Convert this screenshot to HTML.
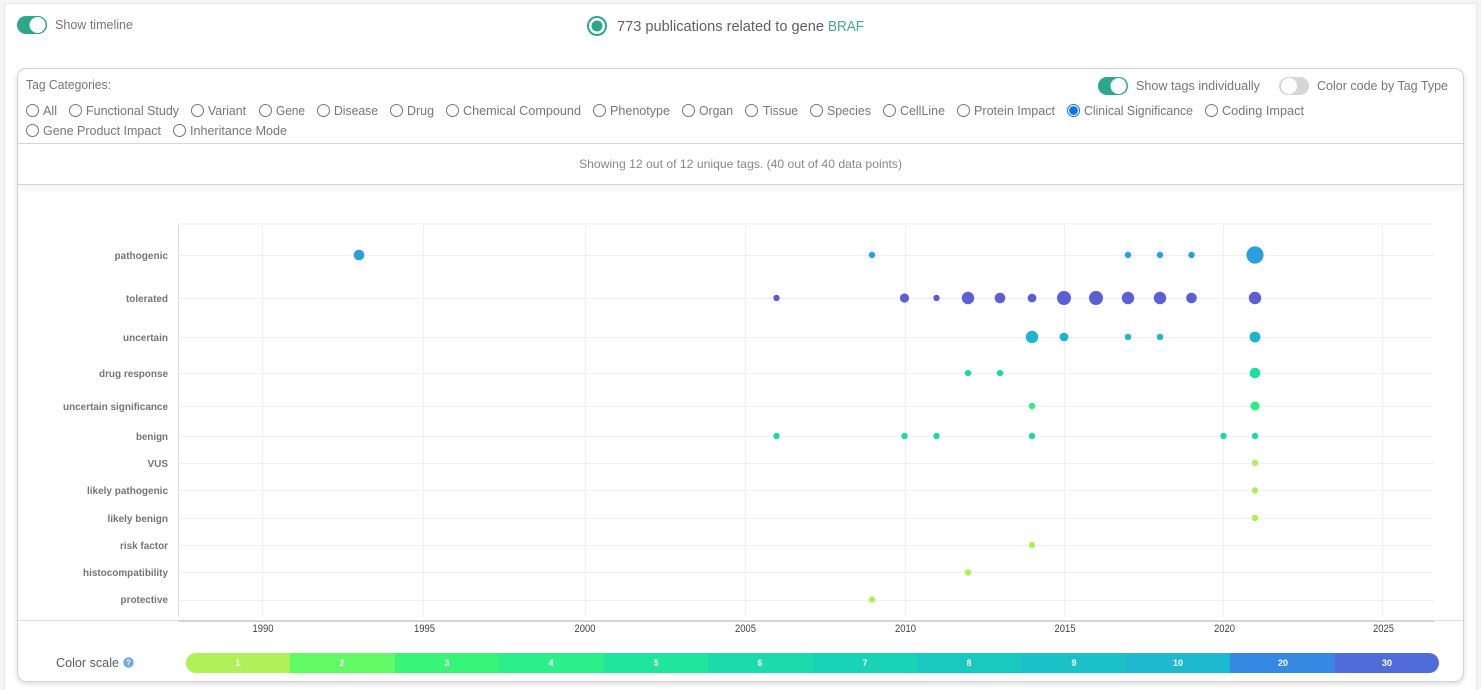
<!DOCTYPE html>
<html lang="en">
<head>
<meta charset="utf-8">
<title>BRAF publications timeline</title>
<style>
html,body{margin:0;padding:0;background:#fff;width:1481px;height:690px;overflow:hidden}
#wrap{position:relative;width:1481px;height:690px;background:#f5f5f5}
#panel{position:absolute;left:5px;top:4px;width:1471px;height:686px;background:#fff;box-shadow:0 0 0 1px #e6e6e6}
#card{position:absolute;left:17px;top:68px;width:1445px;height:612px;border:1px solid #d2d2d2;border-radius:9px;background:#fff;box-shadow:0 2px 6px rgba(0,0,0,.14)}
#chartshadow{position:absolute;left:18px;top:185px;width:1445px;height:10px;background:linear-gradient(#f6f6f6,#fff)}
svg{position:absolute;left:0;top:0}
text{font-family:"Liberation Sans",sans-serif}
.l{font-size:12.5px;fill:#77777b}
.y{font-size:10px;font-weight:700;fill:#74747f}
.t{font-size:11px;fill:#444;text-anchor:middle}
.n{font-size:9px;font-weight:700;fill:#fff;text-anchor:middle}
.r{fill:#fff;stroke:#767676;stroke-width:1}
.g{stroke:#f0f0f4;stroke-width:1;fill:none}
</style>
</head>
<body>
<div id="wrap">
<div id="panel"></div>
<div id="card"></div>
<div id="chartshadow"></div>
<svg width="1481" height="690" viewBox="0 0 1481 690">
  <!-- top toggle -->
  <rect x="17" y="16" width="30" height="18" rx="9" fill="#2ba88c"/>
  <circle cx="37.5" cy="25" r="8" fill="#fff"/>
  <text class="l" x="55" y="29" textLength="78" lengthAdjust="spacingAndGlyphs">Show timeline</text>

  <!-- title -->
  <circle cx="597" cy="26" r="9" fill="#fff" stroke="#2ba88c" stroke-width="2"/>
  <circle cx="597" cy="26" r="5.5" fill="#2ba88c"/>
  <text x="617" y="31" font-size="15" fill="#606064" textLength="207" lengthAdjust="spacingAndGlyphs">773 publications related to gene</text>
  <text x="828" y="31" font-size="15" fill="#45a992" textLength="36" lengthAdjust="spacingAndGlyphs">BRAF</text>

  <!-- card header -->
  <text class="l" x="26" y="89" textLength="85" lengthAdjust="spacingAndGlyphs">Tag Categories:</text>

  <rect x="1098" y="77" width="30" height="18" rx="9" fill="#2ba88c"/>
  <circle cx="1118.5" cy="86" r="8" fill="#fff"/>
  <text class="l" x="1136" y="90" textLength="124" lengthAdjust="spacingAndGlyphs">Show tags individually</text>
  <rect x="1279" y="77" width="30" height="18" rx="9" fill="#d6d6d6"/>
  <circle cx="1289" cy="86" r="8" fill="#fff"/>
  <text class="l" x="1317" y="90" textLength="131" lengthAdjust="spacingAndGlyphs">Color code by Tag Type</text>

  <!-- radios -->
  <circle class="r" cx="32.5" cy="110.5" r="6"/><text class="l" x="43" y="115" textLength="14" lengthAdjust="spacingAndGlyphs">All</text>
  <circle class="r" cx="75.5" cy="110.5" r="6"/><text class="l" x="86" y="115" textLength="93" lengthAdjust="spacingAndGlyphs">Functional Study</text>
  <circle class="r" cx="197.5" cy="110.5" r="6"/><text class="l" x="208" y="115" textLength="38" lengthAdjust="spacingAndGlyphs">Variant</text>
  <circle class="r" cx="265.5" cy="110.5" r="6"/><text class="l" x="276" y="115" textLength="29" lengthAdjust="spacingAndGlyphs">Gene</text>
  <circle class="r" cx="323.5" cy="110.5" r="6"/><text class="l" x="334" y="115" textLength="44" lengthAdjust="spacingAndGlyphs">Disease</text>
  <circle class="r" cx="396.5" cy="110.5" r="6"/><text class="l" x="407" y="115" textLength="27" lengthAdjust="spacingAndGlyphs">Drug</text>
  <circle class="r" cx="452.5" cy="110.5" r="6"/><text class="l" x="463" y="115" textLength="118" lengthAdjust="spacingAndGlyphs">Chemical Compound</text>
  <circle class="r" cx="599.5" cy="110.5" r="6"/><text class="l" x="610" y="115" textLength="60" lengthAdjust="spacingAndGlyphs">Phenotype</text>
  <circle class="r" cx="688.5" cy="110.5" r="6"/><text class="l" x="699" y="115" textLength="34" lengthAdjust="spacingAndGlyphs">Organ</text>
  <circle class="r" cx="751.5" cy="110.5" r="6"/><text class="l" x="763" y="115" textLength="35" lengthAdjust="spacingAndGlyphs">Tissue</text>
  <circle class="r" cx="816.5" cy="110.5" r="6"/><text class="l" x="827" y="115" textLength="44" lengthAdjust="spacingAndGlyphs">Species</text>
  <circle class="r" cx="889.5" cy="110.5" r="6"/><text class="l" x="900" y="115" textLength="45" lengthAdjust="spacingAndGlyphs">CellLine</text>
  <circle class="r" cx="963.5" cy="110.5" r="6"/><text class="l" x="974" y="115" textLength="81" lengthAdjust="spacingAndGlyphs">Protein Impact</text>
  <circle cx="1073.5" cy="110.5" r="6" fill="#fff" stroke="#0a75f0" stroke-width="1"/><circle cx="1073.5" cy="110.5" r="4.4" fill="#0a75f0"/><text class="l" x="1084" y="115" textLength="109" lengthAdjust="spacingAndGlyphs">Clinical Significance</text>
  <circle class="r" cx="1211.5" cy="110.5" r="6"/><text class="l" x="1222" y="115" textLength="82" lengthAdjust="spacingAndGlyphs">Coding Impact</text>
  <circle class="r" cx="32.5" cy="130.5" r="6"/><text class="l" x="43" y="135" textLength="118" lengthAdjust="spacingAndGlyphs">Gene Product Impact</text>
  <circle class="r" cx="179.5" cy="130.5" r="6"/><text class="l" x="190" y="135" textLength="97" lengthAdjust="spacingAndGlyphs">Inheritance Mode</text>

  <path d="M18 143.5H1463M18 184.5H1463" stroke="#d6d6d6" stroke-width="1"/>
  <text x="579" y="168" font-size="12" fill="#88888c" textLength="323" lengthAdjust="spacingAndGlyphs">Showing 12 out of 12 unique tags. (40 out of 40 data points)</text>

  <!-- chart grid -->
  <path class="g" d="M178 224H1433M179 255.5H1433M179 298.5H1433M179 337.5H1433M179 373.5H1433M179 406.5H1433M179 436.5H1433M179 463.5H1433M179 490.5H1433M179 518.5H1433M179 545.5H1433M179 572.5H1433M179 600.5H1433"/>
  <path class="g" d="M262.5 224V617M423.5 224V617M585.5 224V617M745.5 224V617M905.5 224V617M1064.5 224V617M1223.5 224V617M1382.5 224V617"/>
  <path d="M178.5 224V617" stroke="#dcdce6" stroke-width="1"/>
  <path d="M18 620.5H1463" stroke="#dcdce4" stroke-width="1"/>
  <path d="M178 621H1434" stroke="#d4d4de" stroke-width="2"/>

  <!-- y labels -->
  <text class="y" x="114.5" y="259" textLength="53.5" lengthAdjust="spacingAndGlyphs">pathogenic</text>
  <text class="y" x="126" y="302" textLength="42" lengthAdjust="spacingAndGlyphs">tolerated</text>
  <text class="y" x="123" y="341" textLength="45" lengthAdjust="spacingAndGlyphs">uncertain</text>
  <text class="y" x="99" y="377" textLength="69" lengthAdjust="spacingAndGlyphs">drug response</text>
  <text class="y" x="63" y="410" textLength="105" lengthAdjust="spacingAndGlyphs">uncertain significance</text>
  <text class="y" x="136" y="440" textLength="32" lengthAdjust="spacingAndGlyphs">benign</text>
  <text class="y" x="147.5" y="467" textLength="20.5" lengthAdjust="spacingAndGlyphs">VUS</text>
  <text class="y" x="87" y="494" textLength="81" lengthAdjust="spacingAndGlyphs">likely pathogenic</text>
  <text class="y" x="107.5" y="522" textLength="60.5" lengthAdjust="spacingAndGlyphs">likely benign</text>
  <text class="y" x="120" y="549" textLength="48" lengthAdjust="spacingAndGlyphs">risk factor</text>
  <text class="y" x="83" y="576" textLength="85" lengthAdjust="spacingAndGlyphs">histocompatibility</text>
  <text class="y" x="120.5" y="603" textLength="47.5" lengthAdjust="spacingAndGlyphs">protective</text>

  <!-- x labels -->
  <text class="t" x="263" y="632" textLength="21" lengthAdjust="spacingAndGlyphs">1990</text>
  <text class="t" x="424.5" y="632" textLength="21" lengthAdjust="spacingAndGlyphs">1995</text>
  <text class="t" x="585" y="632" textLength="21" lengthAdjust="spacingAndGlyphs">2000</text>
  <text class="t" x="745.5" y="632" textLength="21" lengthAdjust="spacingAndGlyphs">2005</text>
  <text class="t" x="905.5" y="632" textLength="21" lengthAdjust="spacingAndGlyphs">2010</text>
  <text class="t" x="1065" y="632" textLength="21" lengthAdjust="spacingAndGlyphs">2015</text>
  <text class="t" x="1224.5" y="632" textLength="21" lengthAdjust="spacingAndGlyphs">2020</text>
  <text class="t" x="1383.5" y="632" textLength="21" lengthAdjust="spacingAndGlyphs">2025</text>

  <!-- points -->
  <g fill="#2a9fe0">
    <circle cx="359" cy="255" r="5.3"/><circle cx="872" cy="255" r="3.2"/><circle cx="1128" cy="255" r="3.2"/><circle cx="1160" cy="255" r="3.2"/><circle cx="1191.5" cy="255" r="3.2"/><circle cx="1255" cy="255" r="8.6"/>
  </g>
  <g fill="#5a5fd3">
    <circle cx="776.5" cy="298" r="3.2"/><circle cx="904.5" cy="298" r="4.6"/><circle cx="936.5" cy="298" r="3.2"/><circle cx="968" cy="298" r="6.2"/><circle cx="1000" cy="298" r="5.3"/><circle cx="1032" cy="298" r="4.4"/><circle cx="1064" cy="298" r="7"/><circle cx="1096" cy="298" r="7"/><circle cx="1128" cy="298" r="6.2"/><circle cx="1160" cy="298" r="6.2"/><circle cx="1191.5" cy="298" r="5.3"/><circle cx="1255" cy="298" r="6.2"/>
  </g>
  <g fill="#1bb5d0">
    <circle cx="1032" cy="337" r="6.2"/><circle cx="1064" cy="337" r="4.4"/><circle cx="1128" cy="337" r="3.2"/><circle cx="1160" cy="337" r="3.2"/><circle cx="1255" cy="337" r="5.4"/>
  </g>
  <g fill="#18df9a">
    <circle cx="968" cy="373" r="3.2"/><circle cx="1000" cy="373" r="3.2"/><circle cx="1255" cy="373" r="5.3"/>
  </g>
  <circle cx="1032" cy="406" r="3.2" fill="#2eec80"/>
  <circle cx="1255" cy="406" r="4.5" fill="#2eec80"/>
  <g fill="#18d8ad">
    <circle cx="776.5" cy="436" r="3.2"/><circle cx="904.5" cy="436" r="3.2"/><circle cx="936.5" cy="436" r="3.2"/><circle cx="1032" cy="436" r="3.2"/><circle cx="1223.5" cy="436" r="3.2"/><circle cx="1255" cy="436" r="3.2"/>
  </g>
  <g fill="#aeee58">
    <circle cx="1255" cy="463" r="3.2"/><circle cx="1255" cy="490.5" r="3.2"/><circle cx="1255" cy="518" r="3.2"/><circle cx="1032" cy="545" r="3.2"/><circle cx="968" cy="572.5" r="3.2"/><circle cx="872" cy="599.5" r="3.2"/>
  </g>

  <!-- color scale -->
  <text x="56" y="667" font-size="12.5" fill="#55606a" textLength="63" lengthAdjust="spacingAndGlyphs">Color scale</text>
  <circle cx="128.5" cy="662.5" r="5.2" fill="#6fa8e6"/>
  <text x="128.5" y="665.5" font-size="8" font-weight="700" fill="#fff" text-anchor="middle">?</text>

  <path d="M196 653H290V673H196A10 10 0 0 1 196 653Z" fill="#b0f058"/>
  <rect x="290" y="653" width="105" height="20" fill="#62fb65"/>
  <rect x="395" y="653" width="104" height="20" fill="#38f579"/>
  <rect x="499" y="653" width="105" height="20" fill="#2bef88"/>
  <rect x="604" y="653" width="104" height="20" fill="#20e59c"/>
  <rect x="708" y="653" width="105" height="20" fill="#1adba9"/>
  <rect x="813" y="653" width="104" height="20" fill="#18d4b6"/>
  <rect x="917" y="653" width="105" height="20" fill="#18c9c0"/>
  <rect x="1022" y="653" width="104" height="20" fill="#1ac2c8"/>
  <rect x="1126" y="653" width="104" height="20" fill="#1eb9cf"/>
  <rect x="1230" y="653" width="105" height="20" fill="#3689e0"/>
  <path d="M1335 653H1429A10 10 0 0 1 1429 673H1335Z" fill="#4f6cd8"/>
  <text class="n" x="238" y="666">1</text>
  <text class="n" x="342" y="666">2</text>
  <text class="n" x="447" y="666">3</text>
  <text class="n" x="551" y="666">4</text>
  <text class="n" x="656" y="666">5</text>
  <text class="n" x="760" y="666">6</text>
  <text class="n" x="865" y="666">7</text>
  <text class="n" x="969" y="666">8</text>
  <text class="n" x="1074" y="666">9</text>
  <text class="n" x="1178" y="666">10</text>
  <text class="n" x="1283" y="666">20</text>
  <text class="n" x="1387" y="666">30</text>
</svg>
</div>
</body>
</html>
